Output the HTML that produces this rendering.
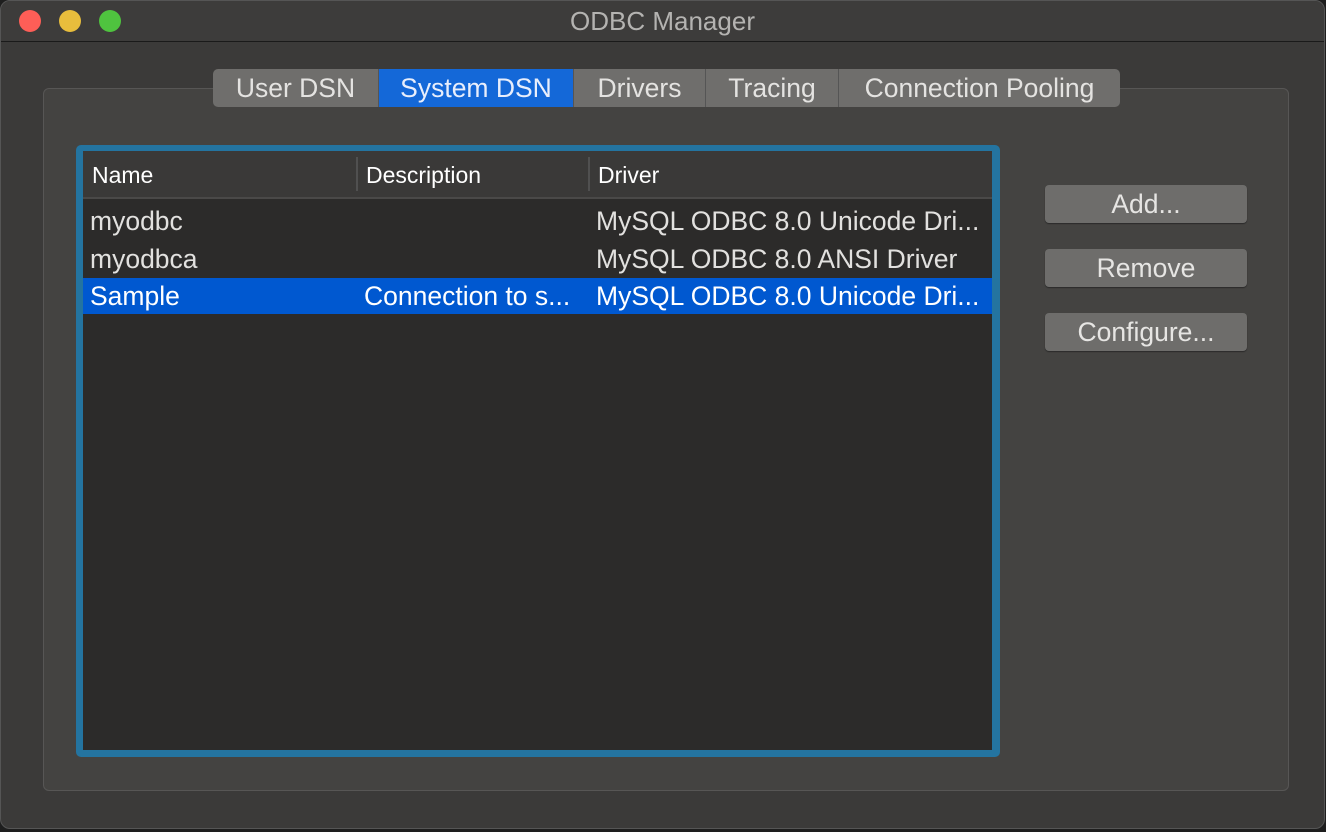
<!DOCTYPE html><html><head><style>
*{margin:0;padding:0;box-sizing:border-box}
body{width:1326px;height:832px;background:#1e1e1e;font-family:"Liberation Sans",sans-serif;position:relative;overflow:hidden}
.win{position:absolute;left:0;top:0;width:1325px;height:829px;background:#3b3a39;border-radius:10px;overflow:hidden;border:1px solid #555}
.title{position:absolute;left:0;top:0;width:100%;height:41px;background:#3d3c3b;border-bottom:1px solid #1a1a1a;text-align:center;line-height:41px;color:#b4b3b1;font-size:26px}
.dot{position:absolute;top:9px;width:22px;height:22px;border-radius:50%}
.group{position:absolute;left:42px;top:87px;width:1246px;height:703px;background:#444341;border:1px solid #575655;border-radius:6px}
.tabs{position:absolute;left:212px;top:68px;height:38px;display:flex;border-radius:5px;overflow:hidden;background:#6f6e6c}
.tab{height:38px;line-height:38px;color:#e4e3e1;font-size:26.5px;text-align:center;border-right:1px solid #555;white-space:nowrap}
.tab.sel{background:#1468d8;color:#e8eefc}
.frame{position:absolute;left:75px;top:144px;width:924px;height:612px;background:#2474a0;border-radius:5px}
.inner{position:absolute;left:7px;top:6px;width:909px;height:599px;background:#2c2b2a}
.hdr{position:absolute;left:0;top:0;width:100%;height:48px;background:#3a3938;border-bottom:2px solid #4a4948;color:#fff;font-size:23px}
.hdr span{position:absolute;top:11px}
.sep{position:absolute;top:6px;width:2px;height:34px;background:#505050}
.row{position:absolute;left:0;width:100%;height:36px;color:#e2e1df;font-size:26.5px}
.row span{position:absolute;top:3px;white-space:nowrap}
.row.sel{background:#0058d0;color:#fff}
.btn{position:absolute;left:1044px;width:202px;height:38px;background:#6e6d6b;border-radius:4px;color:#e6e5e3;font-size:26.5px;text-align:center;line-height:38px;box-shadow:0 1px 1px #2a2a2a}
</style></head><body>
<div class="win">
<div class="title">ODBC Manager</div>
<div class="dot" style="left:18px;background:#fe5e57"></div>
<div class="dot" style="left:58px;background:#e8bd3c"></div>
<div class="dot" style="left:98px;background:#4fc33f"></div>
<div class="group"></div>
<div class="tabs"><div class="tab" style="width:166px">User DSN</div><div class="tab sel" style="width:195px">System DSN</div><div class="tab" style="width:132px">Drivers</div><div class="tab" style="width:133px">Tracing</div><div class="tab" style="width:281px;border:none">Connection Pooling</div></div>
<div class="frame"><div class="inner">
<div class="hdr"><span style="left:9px">Name</span><div class="sep" style="left:273px"></div><span style="left:283px">Description</span><div class="sep" style="left:505px"></div><span style="left:515px">Driver</span></div>
<div class="row" style="top:52px"><span style="left:7px">myodbc</span><span style="left:513px">MySQL ODBC 8.0 Unicode Dri...</span></div>
<div class="row" style="top:90px"><span style="left:7px">myodbca</span><span style="left:513px">MySQL ODBC 8.0 ANSI Driver</span></div>
<div class="row sel" style="top:127px"><span style="left:7px">Sample</span><span style="left:281px">Connection to s...</span><span style="left:513px">MySQL ODBC 8.0 Unicode Dri...</span></div>
</div></div>
<div class="btn" style="top:184px">Add...</div>
<div class="btn" style="top:248px">Remove</div>
<div class="btn" style="top:312px">Configure...</div>
</div>
</body></html>
